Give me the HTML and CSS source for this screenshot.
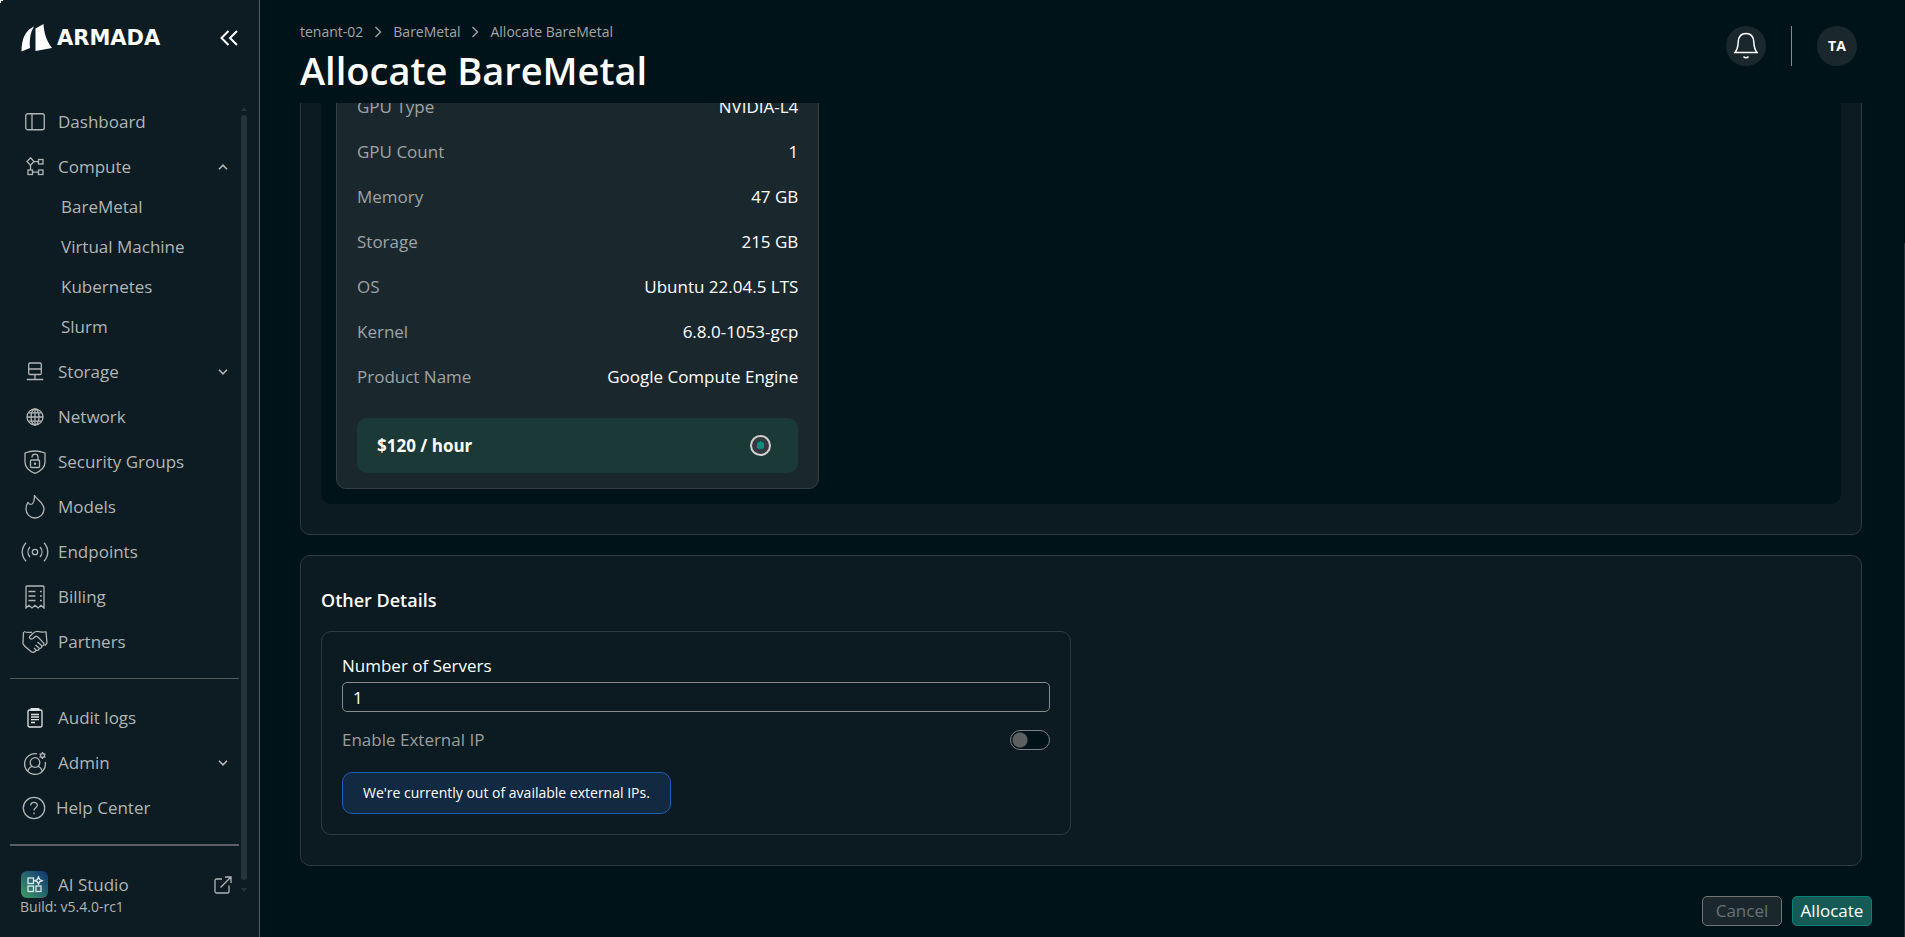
FILE: index.html
```html
<!DOCTYPE html>
<html lang="en">
<head>
<meta charset="utf-8">
<title>Allocate BareMetal</title>
<link rel="stylesheet" href="styles.css">
</head>
<body>
<div class="corner"></div>
<div class="app">
  <aside class="sidebar">
    <div class="brand">
      <svg class="brand-mark" width="32" height="28" viewBox="0 0 32 28" fill="#fff"><path d="M13 2.500C5 6 .5 14 .5 27.500L9 24C8.300 15 9.500 8 13 2.500Z"/><path d="M14.500 4.500 22.500 0c.5 9 3 17 8.500 24l-16.500 3Z"/></svg>
      <span class="brand-name">ARMADA</span>
      <button class="collapse" aria-label="Collapse sidebar"><svg width="18" height="16" viewBox="0 0 18 16" fill="none" stroke="#fff" stroke-width="2"><path d="M8.500 1 1.500 8l7 7M17 1l-7 7 7 7"/></svg></button>
    </div>
    <nav class="nav">
      <a class="item" href="#"><span class="ico"><svg width="20" height="18" viewBox="0 0 20 18"><rect x=".75" y=".75" width="18.500" height="16" rx="2"/><path d="M7 1v16"/></svg></span>Dashboard</a>
      <a class="item" href="#"><span class="ico"><svg width="18" height="19" viewBox="0 0 18 19"><path d="M4.500.8 8 4.500 4.500 8.200 1 4.500Z"/><rect x="12.500" y="2.500" width="4.500" height="4.500"/><rect x="2" y="13" width="4.500" height="4.500"/><rect x="12.500" y="13" width="4.500" height="4.500"/><path d="M8 4.700h4.500M4.500 8.200V13M6.500 15.200h6"/></svg></span>Compute<svg class="chev" width="10" height="6" viewBox="0 0 10 6"><path d="M1 5.200 5 1.200l4 4"/></svg></a>
      <div class="subs">
        <a class="item sub" href="#">BareMetal</a>
        <a class="item sub" href="#">Virtual Machine</a>
        <a class="item sub" href="#">Kubernetes</a>
        <a class="item sub" href="#">Slurm</a>
      </div>
      <a class="item" href="#"><span class="ico"><svg width="18" height="19" viewBox="0 0 18 19"><rect x="2.700" y="1" width="12.600" height="11.500" rx="1.200"/><path d="M2.700 7h12.600M9 12.500v4.500M.8 17.500h16.400"/></svg></span>Storage<svg class="chev" width="10" height="6" viewBox="0 0 10 6"><path d="M1 .8 5 4.800l4-4"/></svg></a>
      <a class="item" href="#"><span class="ico"><svg width="18" height="18" viewBox="0 0 18 18"><circle cx="9" cy="9" r="8"/><ellipse cx="9" cy="9" rx="4" ry="8"/><path d="M9 1v16M1 9h16M2.500 4.800h13M2.500 13.200h13"/></svg></span>Network</a>
      <a class="item" href="#"><span class="ico"><svg width="22" height="24" viewBox="0 0 22 24"><path d="M1 3C7 .6 15 .6 21 3v9c0 5.500-4 9-10 11.300C5 21 1 17.500 1 12Z"/><rect x="6.500" y="10" width="9" height="7.500" rx="1"/><path d="M8 7.500c0-4.500 6-4.500 6 0V10"/><circle cx="11" cy="13.700" r=".6"/></svg></span>Security Groups</a>
      <a class="item" href="#"><span class="ico"><svg width="20" height="25" viewBox="0 0 20 25"><path d="M9.500 1c.5 3.500 9.500 7 9.500 14a9 9 0 0 1-18 0c0-2.500.7-5 2-6.500 1 1.500 2.500 2.300 4 1.500C9.500 8.500 9.500 4 9.500 1Z"/></svg></span>Models</a>
      <a class="item" href="#"><span class="ico"><svg width="28" height="20" viewBox="0 0 28 20"><circle cx="14" cy="10" r="2.700"/><path d="M9 5C6.300 8 6.300 12 9 15M19 5c2.700 3 2.700 7 0 10M5 .8c-5 5.500-5 13 0 18.400M23 .8c5 5.500 5 13 0 18.400"/></svg></span>Endpoints</a>
      <a class="item" href="#"><span class="ico"><svg width="20" height="24" viewBox="0 0 20 24"><path d="M1 23V2q0-1 1-1h16q1 0 1 1v21l-3-2.700-3 2.700-3-2.700L7 23l-3-2.700ZM3.500 6.500h7M3.500 11h7M3.500 15.500h7M15 6.500h1.800M15 11h1.800M15 15.500h1.800"/></svg></span>Billing</a>
      <a class="item" href="#"><span class="ico"><svg width="26" height="24" viewBox="0 0 26 24"><path d="M2 1.500c3 1.500 5 1 8 .7M24 1.500c-4 1.500-5-.2-9-.2-3 0-4 2.200-7 4.700-1.500 2 .5 4 3 2.500l3-2.300c2 .2 3 2 7.500 6.800 1.500 2-.5 3.500-2 2.500l-4-3.500M19.500 15.500c1 2-1 3.500-2.500 2.500L13.500 15M17 18c.5 2-1.500 3-3 2l-2-2M14 20c-1 3-4 2.500-5 1.500L2.500 16 1 13.500 1.500 2M25 13l-2 2.500M24 1.500 25 13"/></svg></span>Partners</a>
      <hr class="rule">
      <a class="item" href="#"><span class="ico"><svg class="bright" width="16" height="20" viewBox="0 0 16 20"><rect x="1" y="2" width="14" height="17" rx="1.500"/><path d="M3.500 1.500h9" stroke-width="3"/><path d="M4 6.500h8M4 9h8M4 11.700h8M4 14.500h4"/></svg></span>Audit logs</a>
      <a class="item" href="#"><span class="ico"><svg width="24" height="24" viewBox="0 0 24 24"><path d="M14 2.800A10.400 10.400 0 1 0 22.200 11"/><circle cx="12" cy="11.500" r="4.800"/><path d="M4.800 20.500c.5-3 2.400-4.700 4.600-5.200M19.200 20.500c-.5-3-2.400-4.700-4.600-5.200"/><circle cx="19.500" cy="4.500" r="2"/><path d="M19.500 1v1.500M19.500 6.500V8M16.500 2.700l1.300.8M22.500 6.300l-1.300-.8M22.500 2.700l-1.300.8M16.500 6.300l1.300-.8"/></svg></span>Admin<svg class="chev" width="10" height="6" viewBox="0 0 10 6"><path d="M1 .8 5 4.800l4-4"/></svg></a>
      <a class="item help" href="#"><span class="ico"><svg width="24" height="24" viewBox="0 0 24 24"><circle cx="12" cy="12" r="10.700"/><path d="M8.700 9.500c0-4.200 6.600-4.200 6.600-.2 0 2.500-3.300 2.400-3.300 5.200M12 16.500v1.800"/></svg></span>Help Center</a>
      <hr class="rule thick">
      <a class="item studio" href="#"><span class="ico"><svg width="27" height="27" viewBox="0 0 27 27"><defs><linearGradient id="g" x1="0" y1="1" x2="1" y2="0"><stop offset="0" stop-color="#3f9d62"/><stop offset=".5" stop-color="#27666f"/><stop offset="1" stop-color="#0d3471"/></linearGradient></defs><rect width="27" height="27" rx="6" fill="url(#g)" stroke="none"/><g stroke="#dce8ea"><rect x="7" y="7" width="5.500" height="5.500"/><rect x="7" y="15" width="5.500" height="5.500"/><rect x="15" y="15" width="5" height="5.500"/><path d="m17.500 6 1.100 2.600 2.600 1.100-2.600 1.100-1.100 2.600-1.100-2.600-2.600-1.100 2.600-1.100Z"/></g></svg></span>AI Studio<svg class="ext" width="18" height="18" viewBox="0 0 18 18"><path d="M8 3H2.500Q1 3 1 4.500v11Q1 17 2.500 17h11q1.500 0 1.500-1.500V9.500M6.500 11.500 17 1M11 1h6v6"/></svg></a>
      <p class="build">Build: v5.4.0-rc1</p>
    </nav>
    <div class="scroll"><i class="up"></i><i class="thumb"></i><i class="down"></i></div>
  </aside>
  <main class="main">
    <header class="top">
      <div class="titles">
        <div class="crumbs"><a href="#">tenant-02</a><svg width="8" height="12" viewBox="0 0 8 12"><path d="m1.500 1 5 5-5 5"/></svg><a href="#">BareMetal</a><svg width="8" height="12" viewBox="0 0 8 12"><path d="m1.500 1 5 5-5 5"/></svg><span>Allocate BareMetal</span></div>
        <h1>Allocate BareMetal</h1>
      </div>
      <div class="user">
        <button class="round" aria-label="Notifications"><svg width="24" height="28" viewBox="0 0 24 28" fill="none" stroke="#fff" stroke-width="1.500"><path d="M1 20.500C4 17 4 14 4.200 10 4.500 4.500 7.500 1.500 12 1.500s7.500 3 7.800 8.500C20 14 20 17 23 20.500ZM9.500 24.500c1.500 1.800 3.500 1.800 5 0"/></svg></button>
        <span class="bar"></span>
        <button class="round">TA</button>
      </div>
    </header>
    <div class="content">
      <section class="card servers">
        <div class="panel">
          <div class="spec">
            <dl>
              <div><dt>GPU Type</dt><dd>NVIDIA-L4</dd></div>
              <div><dt>GPU Count</dt><dd>1</dd></div>
              <div><dt>Memory</dt><dd>47 GB</dd></div>
              <div><dt>Storage</dt><dd>215 GB</dd></div>
              <div><dt>OS</dt><dd>Ubuntu 22.04.5 LTS</dd></div>
              <div><dt>Kernel</dt><dd>6.8.0-1053-gcp</dd></div>
              <div><dt>Product Name</dt><dd>Google Compute Engine</dd></div>
            </dl>
            <label class="price">$120 / hour<input type="radio" name="plan" checked></label>
          </div>
        </div>
      </section>
      <section class="card details">
        <h2>Other Details</h2>
        <div class="form">
          <label class="lab" for="count">Number of Servers</label>
          <input class="text" id="count" type="text" value="1">
          <div class="switch-row"><label for="ext">Enable External IP</label><input class="switch" id="ext" type="checkbox" disabled></div>
          <p class="note">We're currently out of available external IPs.</p>
        </div>
      </section>
    </div>
    <footer class="actions"><button class="btn" disabled>Cancel</button><button class="btn primary">Allocate</button></footer>
    <div class="page-scroll"></div>
  </main>
</div>
</body>
</html>
```
FILE: styles.css
```css
* { box-sizing: border-box; }
body {
  margin: 0;
  background: #001318;
  color: #fff;
  font: 17px/24px "Open Sans", "Noto Sans", sans-serif;
}
a { color: inherit; text-decoration: none; }
button, input { font: inherit; margin: 0; }
p, h1, h2, dl, dd { margin: 0; }
svg { display: block; flex: none; }

.app { display: flex; height: 100vh; overflow: hidden; }

.corner {
  position: absolute;
  top: 0;
  left: 0;
  width: 5px;
  height: 5px;
  background: radial-gradient(circle at 100% 100%, transparent 5px, #e8e8e8 5px);
  z-index: 1;
}

/* Sidebar */
.sidebar {
  position: relative;
  flex: none;
  width: 260px;
  background: #0c1c22;
  border-right: 1px solid #525a5f;
}
.brand {
  display: flex;
  align-items: center;
  gap: 4px;
  height: 99px;
  padding: 0 21px 24px 21px;
}
.brand-name { font: bold 21px/24px "DejaVu Sans", sans-serif; }
.collapse { margin-left: auto; padding: 0; background: none; border: 0; }
.nav { width: 249px; padding: 0 10px; color: #b3b5b5; }
.nav svg { fill: none; stroke: #b3b5b5; stroke-width: 1.3; }
.nav .bright { stroke: #dfe3e4; }
.nav .chev { margin-left: auto; margin-right: 1px; stroke-width: 1.6; }
.nav .ext { margin-left: auto; margin-right: -3px; }
.item { display: flex; align-items: center; height: 45px; padding: 0 10px; }
.ico { display: flex; justify-content: center; width: 29px; margin: 0 9px 0 0; }
.subs { margin: -2px 0 2px; }
.item.sub { height: 40px; padding-left: 51px; }
.item.help .ico { width: 27px; }
.rule { height: 1px; margin: 14px 0 16px; border: 0; background: #50595c; }
.rule.thick { height: 2px; background: #5a6063; }
.build { padding-left: 10px; font-size: 14px; line-height: 20px; }
.nav .studio { margin-bottom: -10px; }
.scroll {
  position: absolute;
  top: 107px;
  bottom: 45px;
  left: 241px;
  width: 6px;
  display: flex;
  flex-direction: column;
  gap: 4px;
}
.thumb { flex: 1; border-radius: 3px; background: #26333a; margin-bottom: 4px; }
.up, .down { border: 3px solid transparent; border-top: 0; border-bottom: 4px solid #26333a; }
.down { border-bottom: 0; border-top: 4px solid #26333a; }

/* Header */
.main { position: relative; flex: 1; min-width: 0; display: flex; flex-direction: column; }
.top { display: flex; justify-content: space-between; height: 103px; padding: 20px 48px 0 40px; flex: none; }
.crumbs { display: flex; align-items: center; gap: 11px; font-size: 14px; color: #a3a6a7; }
.crumbs svg { fill: none; stroke: #a3a6a7; stroke-width: 1.4; }
h1 { font-size: 38px; line-height: 52px; font-weight: 600; }
.user { display: flex; gap: 25px; padding-top: 6px; }
.round {
  display: flex;
  align-items: center;
  justify-content: center;
  width: 40px;
  height: 40px;
  padding: 0;
  border: 0;
  border-radius: 50%;
  background: #1a282e;
  color: #fff;
  font-size: 14px;
  font-weight: 700;
}
.bar { width: 1px; height: 40px; background: #82898c; }

/* Content */
.content {
  flex: 1;
  min-height: 0;
  overflow: hidden;
  display: flex;
  flex-direction: column;
  justify-content: flex-end;
  gap: 20px;
  padding: 0 43px 0 40px;
}
.card { flex: none; border: 1px solid #2f3a40; border-radius: 10px; background: #0c1b21; padding: 0 20px; }
.servers { padding: 20px 20px 30px; }
.panel {
  display: grid;
  grid-template-columns: repeat(3, 1fr);
  gap: 20px;
  padding: 15px;
  border-radius: 10px;
  background: #001318;
}
.spec { padding: 20px 20px 15px; border: 1px solid #353f44; border-radius: 10px; background: #1a282e; }
.spec dl > div { display: flex; justify-content: space-between; height: 45px; align-items: center; }
dt { color: #9fa3a5; }
.price {
  display: flex;
  align-items: center;
  justify-content: space-between;
  height: 55px;
  margin-top: 19px;
  padding: 0 27px 0 20px;
  border-radius: 10px;
  background: #1b3937;
  font-weight: 700;
}
.price input {
  appearance: none;
  width: 21px;
  height: 21px;
  border: 2px solid #cfcfcf;
  border-radius: 50%;
  background: radial-gradient(circle, #009080 4px, #343a40 4px);
}
.details { padding: 32px 20px 30px; }
h2 { font-size: 18px; line-height: 24px; font-weight: 600; }
.form { width: calc(50% - 10px); margin-top: 19px; padding: 20px; border: 1px solid #2f3a40; border-radius: 10px; }
.lab { display: block; line-height: 28px; }
.text {
  display: block;
  width: 100%;
  height: 30px;
  margin-top: 2px;
  padding: 0 10px;
  border: 1px solid #888b8a;
  border-radius: 5px;
  background: transparent;
  color: #fff;
}
.switch-row { display: flex; align-items: center; justify-content: space-between; margin-top: 16px; color: #9a9e9f; }
.switch {
  appearance: none;
  width: 40px;
  height: 20px;
  border: 1px solid #7d8182;
  border-radius: 10px;
  background: radial-gradient(circle at 9px 9px, #5c5f60 7px, #001318 8px);
}
.note {
  width: fit-content;
  margin-top: 20px;
  padding: 10px 20px;
  border: 1px solid #1e5bb8;
  border-radius: 10px;
  background: #112941;
  font-size: 14px;
  line-height: 20px;
}

/* Footer */
.actions { display: flex; justify-content: flex-end; gap: 10px; padding: 30px 33px 11px; }
.btn {
  width: 80px;
  height: 30px;
  padding: 0;
  border: 1px solid #6f7475;
  border-radius: 5px;
  background: #1a282e;
  color: #6b7072;
  line-height: 26px;
}
.btn.primary { background: #165a55; border-color: #008578; color: #fff; }
.page-scroll { position: absolute; right: 0; top: 243px; bottom: 0; width: 1px; background: #26333a; }
```
